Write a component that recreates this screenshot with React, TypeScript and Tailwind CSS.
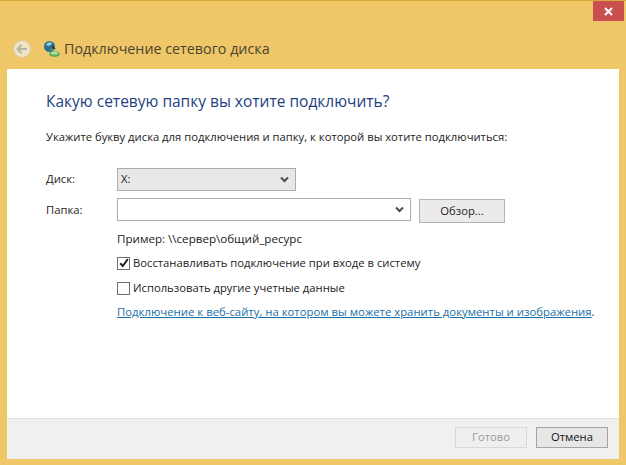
import React from "react";

const Chevron = () => (
  <svg width="9" height="7" viewBox="0 0 9 7" className="shrink-0">
    <path d="M1 1.5 L4.5 5 L8 1.5" fill="none" stroke="#4d4d4d" strokeWidth="2" />
  </svg>
);

const Check = () => (
  <svg width="10" height="10" viewBox="0 0 10 10">
    <path d="M1.2 5.2 L3.8 8 L8.8 1.2" fill="none" stroke="#222" strokeWidth="2" />
  </svg>
);

const DriveIcon = () => (
  <svg width="18" height="18" viewBox="0 0 18 18">
    <ellipse cx="11.5" cy="14" rx="5.5" ry="3" fill="#5fae62" />
    <ellipse cx="11.5" cy="13" rx="3.5" ry="1.6" fill="#b5dca0" />
    <circle cx="6.5" cy="6.5" r="5.5" fill="#2d6f8f" />
    <path d="M3 4.5 Q6 1 9 3 Q8 6 5 6 Z" fill="#8fd0d8" />
    <path d="M6 9 Q9 8 11 10 Q9 12 7 11 Z" fill="#3f8f6a" />
    <path d="M9 6 L12 9" stroke="#333" strokeWidth="1.4" />
  </svg>
);

const BackIcon = () => (
  <div className="flex h-[18px] w-[18px] items-center justify-center rounded-full border border-[#d9cba0] bg-[#eee3c4]">
    <svg width="12" height="10" viewBox="0 0 12 10">
      <path d="M5.5 1 L1.5 5 L5.5 9 M2 5 H11" fill="none" stroke="#b9b3a4" strokeWidth="2" />
    </svg>
  </div>
);

export default function App() {
  return (
    <div
      className="flex h-[465px] w-[626px] flex-col overflow-hidden border-t border-[#d9a83a] bg-[#efc768] text-[11.25px] text-[#222]"
      style={{ fontFamily: '"Open Sans", "Noto Sans", sans-serif' }}
    >
      <div className="flex justify-end pr-[2px]">
        <div className="flex h-[20px] w-[31px] items-center justify-center bg-[#c9504f]">
          <svg width="9" height="9" viewBox="0 0 9 9">
            <path d="M1 1 L8 8 M8 1 L1 8" stroke="#fff" strokeWidth="2" />
          </svg>
        </div>
      </div>
      <div className="flex h-[48px] items-center pl-[13px] pt-[7px]">
        <BackIcon />
        <div className="ml-[12px]">
          <DriveIcon />
        </div>
        <span className="ml-[3px] text-[14.3px] text-[#4a4330]">Подключение сетевого диска</span>
      </div>
      <div className="mx-[7px] flex flex-1 flex-col bg-white">
        <div className="flex-1 pl-[39px] pt-[22px]">
          <div className="text-[15.5px] leading-[20px] text-[#1f3f80]">Какую сетевую папку вы хотите подключить?</div>
          <div className="mt-[18px] leading-[16px]">
            Укажите букву диска для подключения и папку, к которой вы хотите подключиться:
          </div>
          <div className="mt-[23px] flex items-center">
            <span className="w-[71px]">Диск:</span>
            <div className="flex h-[23px] w-[179px] items-center justify-between border border-[#adadad] bg-[#e8e8e8] pl-[3px] pr-[6px]">
              <span>X:</span>
              <Chevron />
            </div>
          </div>
          <div className="mt-[7px] flex items-start">
            <span className="w-[71px] self-center">Папка:</span>
            <div className="flex h-[23px] w-[294px] items-center justify-end border border-[#adadad] bg-white pr-[6px]">
              <Chevron />
            </div>
            <div className="ml-[8px] mt-[1px] flex h-[24px] w-[86px] items-center justify-center border border-[#b5b5b5] bg-[#ebebeb]">
              Обзор...
            </div>
          </div>
          <div className="ml-[71px] mt-[8px] text-[11.6px] leading-[16px]">Пример: \\сервер\общий_ресурс</div>
          <div className="ml-[71px] mt-[8px] flex items-center leading-[16px]">
            <div className="flex h-[13px] w-[13px] items-center justify-center border border-[#707070] bg-white">
              <Check />
            </div>
            <span className="ml-[3px]">Восстанавливать подключение при входе в систему</span>
          </div>
          <div className="ml-[71px] mt-[9px] flex items-center leading-[16px]">
            <div className="h-[13px] w-[13px] border border-[#707070] bg-white" />
            <span className="ml-[3px]">Использовать другие учетные данные</span>
          </div>
          <div className="ml-[71px] mt-[8px] text-[11.35px] leading-[16px]">
            <span className="text-[#1a6fa8] underline">Подключение к веб-сайту, на котором вы можете хранить документы и изображения</span>
            <span>.</span>
          </div>
        </div>
        <div className="flex h-[41px] items-center justify-end gap-[9px] border-t border-[#dfdfdf] bg-[#f0f0f0] pb-[3px] pr-[11px]">
          <div className="flex h-[21px] w-[72px] items-center justify-center border border-[#d9d9d9] bg-[#efefef] text-[#9a9a9a]">
            Готово
          </div>
          <div className="flex h-[21px] w-[72px] items-center justify-center border border-[#a5a5a5] bg-[#e6e6e6] text-[#111]">
            Отмена
          </div>
        </div>
      </div>
      <div className="h-[6px]" />
    </div>
  );
}
